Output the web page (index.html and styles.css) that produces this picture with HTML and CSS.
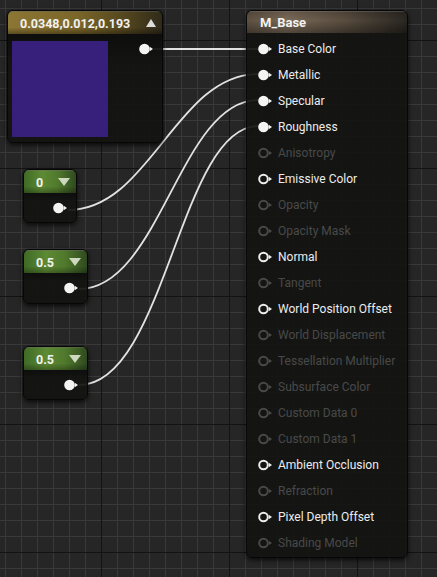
FILE: index.html
```html
<!DOCTYPE html>
<html lang="en">
<head>
<meta charset="utf-8">
<title>Material Graph</title>
<link rel="stylesheet" href="styles.css">
</head>
<body>
<div class="graph">
  <svg class="wires" width="437" height="577" viewBox="0 0 437 577">
    <path d="M154,49 L258,49"/>
    <path d="M68,210 C150,210 176,74 258,74"/>
    <path d="M79,289 C160,289 180,100 258,100"/>
    <path d="M79,385 C165,385 180,126 258,126"/>
  </svg>

  <div class="node node-vec">
    <div class="head head-gold">
      <span class="title">0.0348,0.012,0.193</span>
      <span class="tri tri-up"></span>
    </div>
    <div class="body body-vec">
      <div class="swatch"></div>
      <svg class="pin pin-out pin-vec" width="15" height="12" viewBox="0 0 15 12"><circle cx="5.5" cy="6" r="5.3"/><polygon points="10.8,3.8 14,6 10.8,8.2"/></svg>
    </div>
  </div>

  <div class="node node-scalar s1">
    <div class="head head-green">
      <span class="title">0</span>
      <span class="tri tri-down"></span>
    </div>
    <div class="body body-scalar">
      <svg class="pin pin-out" width="15" height="12" viewBox="0 0 15 12"><circle cx="5.5" cy="6" r="5.3"/><polygon points="10.8,3.8 14,6 10.8,8.2"/></svg>
    </div>
  </div>

  <div class="node node-scalar s2">
    <div class="head head-green">
      <span class="title">0.5</span>
      <span class="tri tri-down"></span>
    </div>
    <div class="body body-scalar">
      <svg class="pin pin-out" width="15" height="12" viewBox="0 0 15 12"><circle cx="5.5" cy="6" r="5.3"/><polygon points="10.8,3.8 14,6 10.8,8.2"/></svg>
    </div>
  </div>

  <div class="node node-scalar s3">
    <div class="head head-green">
      <span class="title">0.5</span>
      <span class="tri tri-down"></span>
    </div>
    <div class="body body-scalar">
      <svg class="pin pin-out" width="15" height="12" viewBox="0 0 15 12"><circle cx="5.5" cy="6" r="5.3"/><polygon points="10.8,3.8 14,6 10.8,8.2"/></svg>
    </div>
  </div>

  <div class="node node-mat">
    <div class="head head-mat">
      <span class="title">M_Base</span>
    </div>
    <ul class="inputs">
      <li class="row on"><svg class="pin" width="15" height="12" viewBox="0 0 15 12"><circle cx="5.5" cy="6" r="5.3"/><polygon points="10.8,3.8 14,6 10.8,8.2"/></svg><span>Base Color</span></li>
      <li class="row on"><svg class="pin" width="15" height="12" viewBox="0 0 15 12"><circle cx="5.5" cy="6" r="5.3"/><polygon points="10.8,3.8 14,6 10.8,8.2"/></svg><span>Metallic</span></li>
      <li class="row on"><svg class="pin" width="15" height="12" viewBox="0 0 15 12"><circle cx="5.5" cy="6" r="5.3"/><polygon points="10.8,3.8 14,6 10.8,8.2"/></svg><span>Specular</span></li>
      <li class="row on"><svg class="pin" width="15" height="12" viewBox="0 0 15 12"><circle cx="5.5" cy="6" r="5.3"/><polygon points="10.8,3.8 14,6 10.8,8.2"/></svg><span>Roughness</span></li>
      <li class="row off"><svg class="pin ring" width="15" height="12" viewBox="0 0 15 12"><circle cx="5.5" cy="6" r="4.3"/><polygon points="10.8,3.8 14,6 10.8,8.2"/></svg><span>Anisotropy</span></li>
      <li class="row on"><svg class="pin ring" width="15" height="12" viewBox="0 0 15 12"><circle cx="5.5" cy="6" r="4.3"/><polygon points="10.8,3.8 14,6 10.8,8.2"/></svg><span>Emissive Color</span></li>
      <li class="row off"><svg class="pin ring" width="15" height="12" viewBox="0 0 15 12"><circle cx="5.5" cy="6" r="4.3"/><polygon points="10.8,3.8 14,6 10.8,8.2"/></svg><span>Opacity</span></li>
      <li class="row off"><svg class="pin ring" width="15" height="12" viewBox="0 0 15 12"><circle cx="5.5" cy="6" r="4.3"/><polygon points="10.8,3.8 14,6 10.8,8.2"/></svg><span>Opacity Mask</span></li>
      <li class="row on"><svg class="pin ring" width="15" height="12" viewBox="0 0 15 12"><circle cx="5.5" cy="6" r="4.3"/><polygon points="10.8,3.8 14,6 10.8,8.2"/></svg><span>Normal</span></li>
      <li class="row off"><svg class="pin ring" width="15" height="12" viewBox="0 0 15 12"><circle cx="5.5" cy="6" r="4.3"/><polygon points="10.8,3.8 14,6 10.8,8.2"/></svg><span>Tangent</span></li>
      <li class="row on"><svg class="pin ring" width="15" height="12" viewBox="0 0 15 12"><circle cx="5.5" cy="6" r="4.3"/><polygon points="10.8,3.8 14,6 10.8,8.2"/></svg><span>World Position Offset</span></li>
      <li class="row off"><svg class="pin ring" width="15" height="12" viewBox="0 0 15 12"><circle cx="5.5" cy="6" r="4.3"/><polygon points="10.8,3.8 14,6 10.8,8.2"/></svg><span>World Displacement</span></li>
      <li class="row off"><svg class="pin ring" width="15" height="12" viewBox="0 0 15 12"><circle cx="5.5" cy="6" r="4.3"/><polygon points="10.8,3.8 14,6 10.8,8.2"/></svg><span>Tessellation Multiplier</span></li>
      <li class="row off"><svg class="pin ring" width="15" height="12" viewBox="0 0 15 12"><circle cx="5.5" cy="6" r="4.3"/><polygon points="10.8,3.8 14,6 10.8,8.2"/></svg><span>Subsurface Color</span></li>
      <li class="row off"><svg class="pin ring" width="15" height="12" viewBox="0 0 15 12"><circle cx="5.5" cy="6" r="4.3"/><polygon points="10.8,3.8 14,6 10.8,8.2"/></svg><span>Custom Data 0</span></li>
      <li class="row off"><svg class="pin ring" width="15" height="12" viewBox="0 0 15 12"><circle cx="5.5" cy="6" r="4.3"/><polygon points="10.8,3.8 14,6 10.8,8.2"/></svg><span>Custom Data 1</span></li>
      <li class="row on"><svg class="pin ring" width="15" height="12" viewBox="0 0 15 12"><circle cx="5.5" cy="6" r="4.3"/><polygon points="10.8,3.8 14,6 10.8,8.2"/></svg><span>Ambient Occlusion</span></li>
      <li class="row off"><svg class="pin ring" width="15" height="12" viewBox="0 0 15 12"><circle cx="5.5" cy="6" r="4.3"/><polygon points="10.8,3.8 14,6 10.8,8.2"/></svg><span>Refraction</span></li>
      <li class="row on"><svg class="pin ring" width="15" height="12" viewBox="0 0 15 12"><circle cx="5.5" cy="6" r="4.3"/><polygon points="10.8,3.8 14,6 10.8,8.2"/></svg><span>Pixel Depth Offset</span></li>
      <li class="row off"><svg class="pin ring" width="15" height="12" viewBox="0 0 15 12"><circle cx="5.5" cy="6" r="4.3"/><polygon points="10.8,3.8 14,6 10.8,8.2"/></svg><span>Shading Model</span></li>
    </ul>
  </div>
</div>
</body>
</html>
```

FILE: styles.css
```css
* { box-sizing: border-box; }

html, body {
  margin: 0;
  padding: 0;
}

body {
  width: 437px;
  height: 577px;
  overflow: hidden;
  font-family: Roboto, "Liberation Sans", sans-serif;
  background-color: #262626;
  background-image:
    linear-gradient(to right, #131313 1px, transparent 1px),
    linear-gradient(to bottom, #131313 1px, transparent 1px),
    linear-gradient(to right, #393939 1px, transparent 1px),
    linear-gradient(to bottom, #393939 1px, transparent 1px);
  background-size: 128px 128px, 128px 128px, 16px 16px, 16px 16px;
  background-position: 101px 40px, 101px 40px, 5px 8px, 5px 8px;
}

.graph {
  position: relative;
  width: 437px;
  height: 577px;
}

.wires {
  position: absolute;
  left: 0;
  top: 0;
  z-index: 1;
  fill: none;
}

.wires path {
  stroke: #e2e2e2;
  stroke-width: 1.8;
  fill: none;
}

.node {
  position: absolute;
  z-index: 2;
  display: flex;
  flex-direction: column;
  border: 1px solid #070707;
  border-radius: 6px;
  background: rgba(19, 20, 18, 0.93);
  box-shadow: 0 2px 5px rgba(0, 0, 0, 0.75);
  overflow: hidden;
}

.head {
  display: flex;
  align-items: center;
  justify-content: space-between;
  color: #f2f2f2;
  font-weight: 700;
  font-size: 12px;
  border-top: 1px solid rgba(255, 255, 255, 0.18);
}

.title {
  white-space: nowrap;
}

.head-gold {
  height: 23px;
  padding: 0 6px 0 12px;
  font-size: 12.5px;
  background:
    linear-gradient(to bottom, rgba(0,0,0,0) 70%, rgba(0,0,0,0.35) 100%),
    linear-gradient(to right, #8c7634 0%, #7a6629 45%, #4e421d 80%, #2f2a1a 100%);
}

.head-green {
  height: 23px;
  padding: 0 4px 0 12px;
  font-size: 12.5px;
  background:
    linear-gradient(to bottom, rgba(0,0,0,0) 70%, rgba(0,0,0,0.3) 100%),
    linear-gradient(to right, #3f6a26 0%, #5d8a34 35%, #50792c 65%, #2f4a1f 100%);
}

.head-mat {
  height: 22px;
  padding: 0 12px 0 13px;
  font-size: 13px;
  background:
    linear-gradient(to bottom, rgba(0,0,0,0.15) 0%, rgba(0,0,0,0) 40%, rgba(0,0,0,0.35) 100%),
    linear-gradient(to right, #5e5142 0%, #7a6a58 25%, #5a4e40 60%, #2a2722 100%);
}

.tri {
  width: 0;
  height: 0;
  border-left: 5px solid transparent;
  border-right: 5px solid transparent;
}

.tri-up {
  border-bottom: 8px solid #dcdcdc;
}

.tri-down {
  border-left-width: 6px;
  border-right-width: 6px;
  border-top: 8px solid #cdd8bf;
  margin-right: 2px;
}

.node-vec {
  left: 7px;
  top: 10px;
  width: 156px;
  height: 133px;
}

.body {
  flex: 1;
  display: flex;
  background: linear-gradient(to bottom, rgba(0,0,0,0.35), rgba(0,0,0,0) 30%);
}

.body-vec {
  padding: 7px 8px 0 4px;
  align-items: flex-start;
}

.swatch {
  width: 96px;
  height: 96px;
  background: #36207b;
}

.pin {
  flex: none;
  display: block;
  fill: #f4f4f4;
}

.pin-out {
  margin-left: auto;
}

.pin-vec {
  margin-top: 2px;
}

.body-scalar {
  padding: 9px 8px 0 0;
  align-items: flex-start;
}

.node-scalar {
  left: 23px;
  height: 54px;
}

.s1 { top: 169px; width: 54px; }
.s2 { top: 249px; width: 65px; height: 55px; }
.s3 { top: 346px; width: 65px; }

.node-mat {
  left: 246px;
  top: 10px;
  width: 162px;
  height: 548px;
}

.inputs {
  list-style: none;
  margin: 0;
  padding: 3px 0 0 11px;
}

.row {
  display: flex;
  align-items: center;
  gap: 5px;
  height: 26px;
  font-size: 12px;
  white-space: nowrap;
}

.row.on { color: #ececec; }
.row.off { color: #494949; }

.pin.ring circle {
  fill: none;
  stroke-width: 2;
}

.row.on .pin.ring circle { stroke: #ececec; }
.row.on .pin.ring polygon { fill: #ececec; }
.row.off .pin.ring circle { stroke: #494949; }
.row.off .pin.ring polygon { fill: #494949; }
```
